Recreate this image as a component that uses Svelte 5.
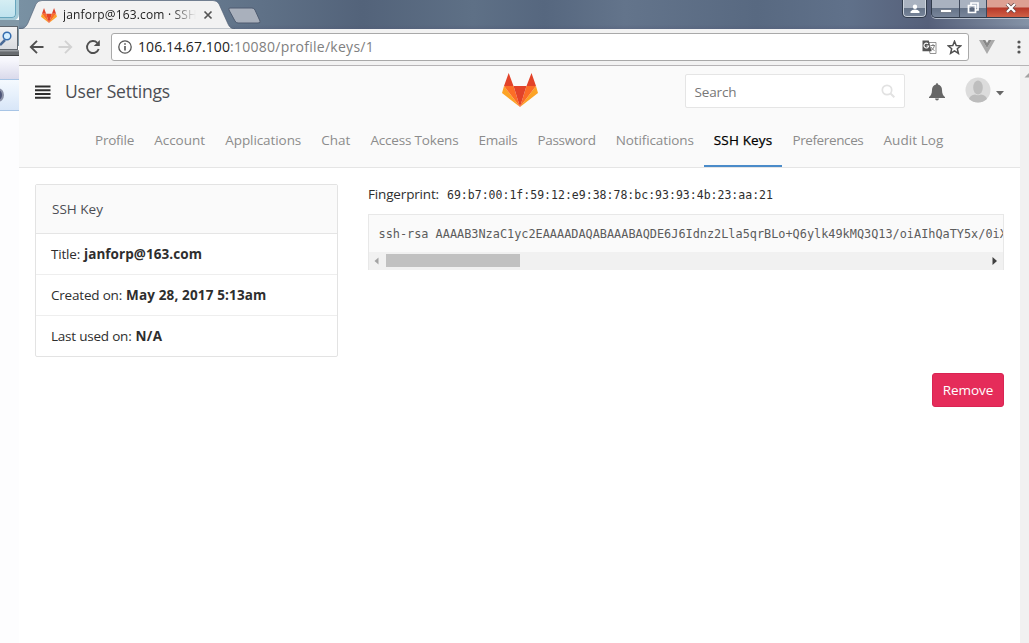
<script>
  const tabs = [
    ['Profile', 39], ['Account', 51], ['Applications', 76], ['Chat', 29],
    ['Access Tokens', 88], ['Emails', 39], ['Password', 58], ['Notifications', 78],
    ['SSH Keys', 58.5], ['Preferences', 71], ['Audit Log', 60]
  ];
  const details = [
    { label: 'Title:', lw: 29, value: 'janforp@163.com', vw: 118 },
    { label: 'Created on:', lw: 71, value: 'May 28, 2017 5:13am', vw: 140.5 },
    { label: 'Last used on:', lw: 80.5, value: 'N/A', vw: 27 }
  ];

  // Spreads a label's letters over a given width.
  function fit(node, width) {
    const natural = node.getBoundingClientRect().width;
    node.style.letterSpacing = (width - natural) / node.textContent.length + 'px';
  }
</script>

{#snippet fox()}
  <svg class="fox" viewBox="0 0 36 34" aria-hidden="true">
    <path fill="#e24329" d="M2 13 6.7 0 11.5 13zM24.5 13 29.5 0 34 13z" />
    <path fill="#fca326" d="M2 13 0 20 18 34zM34 13 36 20 18 34z" />
    <path fill="#fc6d26" d="M2 13h9.500L18 34zM34 13h-9.500L18 34z" />
    <path fill="#e24329" d="M11.500 13h13L18 34z" />
  </svg>
{/snippet}

<div class="screen">
  <div class="behind">
    <div class="glass"></div>
    <div class="find">
      <svg width="19" height="24" viewBox="0 0 19 24"><path d="M5 13 0 18" stroke="#4b6b98" stroke-width="2.500" /><circle cx="7" cy="9" r="3.800" fill="#d6efff" stroke="#356daf" stroke-width="1.500" /></svg>
    </div>
    <div class="edge"></div>
    <div class="lilac"></div>
    <div class="band"><i></i></div>
  </div>

  <div class="browser">
    <div class="titlebar">
      <svg class="shapes" width="250" height="29" viewBox="0 0 250 29">
        <path d="M0 29C5 29 7 27 9 23L17 4Q19 .500 23 .500H194Q198 .500 200 4L209 24Q211 29 216 29z" fill="#f2f2f2" stroke="#4c5b70" stroke-width=".6" />
        <path d="M211 8H233Q235 8 236 10L241 21Q242 23 239 23H219Q217 23 216 21L210 10Q209 8 211 8z" fill="#a9b0bc" stroke="#4e5b70" />
      </svg>
      <div class="tab">
        {@render fox()}
        <span class="tabtitle"><span use:fit={134}>janforp@163.com · SSH</span></span>
        <svg width="10" height="10" viewBox="0 0 10 10"><path d="m1.500 1.500 7 7m0-7-7 7" stroke="#555" stroke-width="1.700" /></svg>
      </div>
      <div class="controls">
        <div class="ctl user"><svg width="10" height="10" viewBox="0 0 10 10"><circle cx="5" cy="2.800" r="2.200" fill="#fff" /><path d="M.5 9V7.500Q2 5.500 5 5.500T9.500 7.500V9z" fill="#fff" /></svg></div>
        <div class="group">
          <div class="ctl min"><svg width="12" height="10" viewBox="0 0 12 10"><path d="M.5 4.500h11v3H.5z" fill="#fff" stroke="#5b6576" stroke-width=".7" /></svg></div>
          <div class="ctl max"><svg width="12" height="12" viewBox="0 0 12 12"><path d="M4 3V1h7v7H9M1.500 3.500h7v7h-7z" fill="none" stroke="#fff" stroke-width="1.700" /><path d="M3.800 5.800h2.500v2.500H3.800z" fill="none" stroke="#555e70" stroke-width=".8" /></svg></div>
          <div class="ctl close"><svg width="12" height="10" viewBox="0 0 12 10"><path d="m2 1 8 8m0-8-8 8" stroke="#60403f" stroke-width="3.600" /><path d="m2 1 8 8m0-8-8 8" stroke="#fff" stroke-width="2.300" /></svg></div>
        </div>
      </div>
    </div>

    <div class="toolbar">
      <svg width="16" height="16" viewBox="0 0 16 16"><path d="M14.500 8H2M8 1.800 1.800 8 8 14.200" fill="none" stroke="#505050" stroke-width="1.900" /></svg>
      <svg width="16" height="16" viewBox="0 0 16 16"><path d="M1.500 8H14M8 1.800 14.200 8 8 14.200" fill="none" stroke="#d2d2d2" stroke-width="1.900" /></svg>
      <svg width="16" height="16" viewBox="0 0 16 16"><path d="M13.700 10A6 6 0 1 1 12.300 3.800" fill="none" stroke="#505050" stroke-width="1.900" /><path d="M14.800 1v6H8.800z" fill="#505050" /></svg>
      <div class="address">
        <svg width="14" height="14" viewBox="0 0 14 14"><circle cx="7" cy="7" r="6.200" fill="none" stroke="#555" stroke-width="1.300" /><path d="M7 6v4.500M7 3.200v1.600" stroke="#555" stroke-width="1.600" /></svg>
        <span class="url"><span class="host" use:fit={92}>106.14.67.100</span><span class="path" use:fit={144}>:10080/profile/keys/1</span></span>
        <svg width="15" height="14" viewBox="0 0 15 14"><path d="M6 2.500h8v11H8z" fill="#fff" stroke="#888" stroke-width=".9" /><path d="M8.500 5.500H13M11 4v1.500M12.500 5.500Q12 9 8.800 10.500M9 7q1 2.500 3.500 3.500" fill="none" stroke="#777" stroke-width=".9" /><path d="M.5.500h6.300l2.700 10.800h-9z" fill="#555" /><path d="M6 3.800A2.400 2.400 0 1 0 6.700 6H4.500" fill="none" stroke="#fff" stroke-width="1.100" /></svg>
        <svg width="15" height="15" viewBox="0 0 15 15"><path d="m7.500 1.300 1.700 4.200 4.600.3-3.500 3 1.100 4.500-3.900-2.500-3.900 2.500 1.100-4.500-3.500-3 4.600-.3z" fill="none" stroke="#505050" stroke-width="1.500" /></svg>
      </div>
      <svg class="vue" width="16" height="14" viewBox="0 0 16 14"><path d="M0 0h3.300L8 8l4.700-8H16L8 14z" fill="#aaa" /><path d="M3.300 0h3L8 3l1.700-3h3L8 8z" fill="#888" /></svg>
      <svg class="dots" width="4" height="14" viewBox="0 0 4 14" fill="#555"><circle cx="2" cy="2" r="1.600" /><circle cx="2" cy="7" r="1.600" /><circle cx="2" cy="12" r="1.600" /></svg>
    </div>

    <div class="viewport">
      <div class="page">
        <header>
          <div class="topbar">
            <div class="left">
              <svg class="burger" width="16" height="14" viewBox="0 0 16 14"><path d="M0 1.500h15.500M0 5.200h15.500M0 9h15.500M0 12.800h15.500" stroke="#2e2e2e" stroke-width="1.900" /></svg>
              <h1><span use:fit={105}>User Settings</span></h1>
            </div>
            <div class="brand">{@render fox()}</div>
            <div class="right">
              <div class="search"><span use:fit={42}>Search</span><svg width="14" height="14" viewBox="0 0 14 14"><circle cx="6" cy="6" r="4.700" fill="none" stroke="#e2e2e2" stroke-width="1.700" /><path d="m9.500 9.500 3.800 3.800" stroke="#e2e2e2" stroke-width="2" /></svg></div>
              <svg class="bell" width="16" height="18" viewBox="0 0 16 18"><path d="M7 1.500Q7 0 8 0t1 1.500Q13 2.500 13 7c0 4 1.300 5.800 3 7v1H0v-1c1.700-1.200 3-3 3-7q0-4.500 4-5.500zM6 15.500h4Q9.700 17.500 8 17.500T6 15.500z" fill="#666" /></svg>
              <svg class="avatar" width="26" height="26" viewBox="0 0 26 26"><circle cx="13" cy="13" r="12.500" fill="#dcdcdc" /><path d="M4 22Q5 18 10 17.500q3 1.500 6 0 5 .5 6 4.500Q18 25.500 13 25.500T4 22z" fill="#bcbcbc" /><ellipse cx="13" cy="10.500" rx="4.800" ry="7" fill="#bebebe" /></svg>
              <svg class="caret" width="8" height="5" viewBox="0 0 8 5"><path d="M0 0h8L4 4.500z" fill="#666" /></svg>
            </div>
          </div>
          <nav>
            {#each tabs as [name, width]}
              <a href="#top" class:active={name === 'SSH Keys'}><span use:fit={width}>{name}</span></a>
            {/each}
          </nav>
        </header>
        <main>
          <section class="panel">
            <div class="heading"><span use:fit={51}>SSH Key</span></div>
            {#each details as row}
              <div class="row"><span use:fit={row.lw}>{row.label}</span><strong use:fit={row.vw}>{row.value}</strong></div>
            {/each}
          </section>
          <section class="key">
            <p><span use:fit={71}>Fingerprint:</span><code use:fit={326}>69:b7:00:1f:59:12:e9:38:78:bc:93:93:4b:23:aa:21</code></p>
            <div class="codebox">
              <pre>ssh-rsa AAAAB3NzaC1yc2EAAAADAQABAAABAQDE6J6Idnz2Lla5qrBLo+Q6ylk49kMQ3Q13/oiAIhQaTY5x/0iX</pre>
              <div class="hscroll">
                <svg width="5" height="8" viewBox="0 0 5 8"><path d="M4.500.500v7L.5 4z" fill="#a3a3a3" /></svg>
                <div class="thumb"></div>
                <svg width="5" height="8" viewBox="0 0 5 8"><path d="M.5 0v8L5 4z" fill="#404040" /></svg>
              </div>
            </div>
            <button><span use:fit={50.5}>Remove</span></button>
          </section>
        </main>
      </div>
      <div class="vscroll"><svg width="9" height="5" viewBox="0 0 9 5"><path d="M9 0v4.500H4.500z" fill="#a3a3a3" /></svg></div>
    </div>
  </div>
</div>

<style>
  :global(body) { margin: 0; }
  .screen { display: flex; width: 1029px; height: 643px; overflow: hidden; background: #fff; font-family: "Open Sans", "Noto Sans", sans-serif; font-size: 13.5px; color: #2e2e2e; }
  .screen * { box-sizing: border-box; }
  svg { display: block; flex: none; }
  span, strong, code { white-space: pre; }

  .behind { width: 19px; display: flex; flex-direction: column; flex: none; background: #fdfdfe; }
  .glass { height: 18px; width: 16px; background: linear-gradient(#d5eef3, #bfe3ef); border: solid #67a6bd; border-width: 0 1px 1px 0; border-radius: 0 0 4px; box-shadow: 0 0 0 3px #a5cbd8; }
  .find { height: 24px; margin-top: 8px; width: 18px; overflow: hidden; background: linear-gradient(#f2f2f2, #d9dce1); border: solid #60666d; border-width: 1px 1px 1px 0; box-shadow: 0 -5px 0 1px #8298a6; }
  .edge { height: 6px; background: linear-gradient(#a5a9af, #686b70 40% 80%, #222); }
  .lilac { height: 23px; background: linear-gradient(#f6f6fc 0 20%, #dadaeb); }
  .band { height: 32px; background: linear-gradient(#f5faff, #d8e6f8); border: solid #a8c5e6; border-width: 1px 0; overflow: hidden; padding-top: 8px; }
  .band i { display: block; width: 12px; height: 14px; margin-left: -8px; border-radius: 50%; background: #4d5578; border: 2px solid #8c92a7; }

  .browser { flex: 1; min-width: 0; display: flex; flex-direction: column; }
  .titlebar { height: 29px; flex: none; position: relative; display: flex; justify-content: space-between; background: linear-gradient(#0000 0 85%, #4c517044), linear-gradient(90deg, #7991a3, #5f7187 24%, #53637a 34%, #5e7086 45%, #56677f 52%, #63748b 60%, #586981 73%, #60718a 82%, #56607a 90%, #8593a7); }
  .shapes { position: absolute; left: 0; top: 0; }
  .tab { position: relative; display: flex; align-items: center; height: 29px; padding: 1px 0 0 22px; }
  .tab .fox { width: 16px; height: 15px; }
  .tabtitle { width: 133px; margin: -2px 7px 0 6px; overflow: hidden; font-size: 12px; color: #222; -webkit-mask-image: linear-gradient(90deg, #000 108px, transparent 133px); }
  .controls { display: flex; gap: 4px; height: 18px; margin-right: -7px; }
  .ctl { display: flex; align-items: center; justify-content: center; height: 17px; background: linear-gradient(#a9b2c0 45%, #667489 50%, #78859a); }
  .user { width: 25px; height: 18px; border: 1px solid #303b4b; border-top: 0; border-radius: 0 0 5px 5px; box-shadow: inset 0 -1px #ccd3dd, inset 1px 0 #ccd3dd, inset -1px 0 #ccd3dd; }
  .group { display: flex; border: 1px solid #303b4b; border-top: 0; border-radius: 0 0 0 5px; overflow: hidden; box-shadow: 0 1px #b4bdca; }
  .min { width: 28px; border-right: 1px solid #3e485a; padding-top: 2px; }
  .max { width: 27px; border-right: 1px solid #3e485a; padding-bottom: 1px; }
  .close { width: 48px; padding-bottom: 1px; background: linear-gradient(#dda093 0 40%, #b7392a 48%, #d06046); }

  .toolbar { height: 37px; flex: none; display: flex; align-items: center; padding: 0 8px 0 10px; background: #f2f2f2; border-bottom: 1px solid #b6b4b6; }
  .toolbar > svg:nth-child(-n + 3) { margin-right: 12px; }
  .address { display: flex; align-items: center; flex: none; width: 858px; height: 28px; margin-left: -2px; padding: 0 6px; background: #fff; border: 1px solid #a9a9a9; border-radius: 3px; }
  .address > svg + svg { margin-left: 10px; }
  .url { flex: 1; display: flex; margin: -2px 0 0 6px; font-size: 14px; color: #222; }
  .path { color: #808080; }
  .vue { margin-left: 10px; }
  .dots { margin-left: 22px; }

  .viewport { flex: 1; display: flex; min-height: 0; }
  .page { width: 1001px; flex: none; }
  .vscroll { flex: 1; background: #f1f1f1; padding-top: 7px; }
  header { height: 102px; background: #fafafa; border-bottom: 1px solid #e5e5e5; }
  .topbar { display: grid; grid-template-columns: 1fr 36px 1fr; height: 51px; }
  .left { display: flex; align-items: center; padding-left: 16px; }
  .burger { margin-right: 14px; }
  h1 { margin: -2px 0 0; font-size: 17.5px; font-weight: 400; line-height: 24px; color: #4c4e54; }
  .brand { padding-top: 7px; }
  .brand .fox { width: 36px; height: 34px; }
  .right { display: flex; align-items: center; height: 50px; padding-left: 147px; }
  .search { display: flex; align-items: center; justify-content: space-between; width: 220px; height: 34px; padding: 0 9px; border: 1px solid #e5e5e5; border-radius: 2px; background: #fff; color: #777; }
  .search span { padding-top: 2px; }
  .bell { margin: 2px 0 0 24px; }
  .avatar { margin: -2px 5px 0 20px; }
  .caret { margin-top: 5px; }
  nav { display: flex; height: 50px; padding-left: 66px; }
  nav a { flex: none; padding: 11px 10.050px 0; line-height: 24px; height: 50px; color: #8c8c8c; text-decoration: none; border-bottom: 2px solid transparent; }
  nav a.active { color: #000; border-color: #4a8bc9; -webkit-text-stroke: .25px #000; }

  main { display: flex; align-items: flex-start; padding: 16px; gap: 30px; }
  .panel { width: 303px; flex: none; border: 1px solid #e3e3e3; border-radius: 2px; }
  .heading { height: 49px; padding: 0 16px; line-height: 48px; background: #fafafa; border-bottom: 1px solid #e5e5e5; color: #4c4e54; }
  .row { display: flex; gap: 4px; height: 41px; padding: 0 15px; line-height: 40px; border-bottom: 1px solid #eee; }
  .row:last-child { border: 0; height: 40px; }
  strong { font-weight: 700; }
  .key { width: 636px; flex: none; }
  .key p { display: flex; align-items: baseline; gap: 8px; margin: 0; height: 30px; line-height: 20px; }
  code, pre { font-family: "DejaVu Sans Mono", monospace; }
  code { font-size: 11.5px; }
  .codebox { height: 56px; border: 1px solid #e8e8e8; border-bottom: 0; background: #fafafa; overflow: hidden; }
  pre { height: 37px; margin: 0; padding-left: 9.500px; line-height: 38px; font-size: 11.870px; color: #5c5c5c; overflow: hidden; }
  .hscroll { height: 18px; display: flex; align-items: center; justify-content: space-between; padding: 0 6px 1px 5px; background: #f1f1f1; }
  .thumb { width: 134px; height: 13px; margin: 0 auto 0 7px; background: #c1c1c1; }
  button { display: block; width: 72px; height: 34px; margin: 103px 0 0 auto; padding: 0; border: 1px solid #d92453; border-radius: 3px; background: #e52c5a; color: #fff; font: inherit; }
</style>
